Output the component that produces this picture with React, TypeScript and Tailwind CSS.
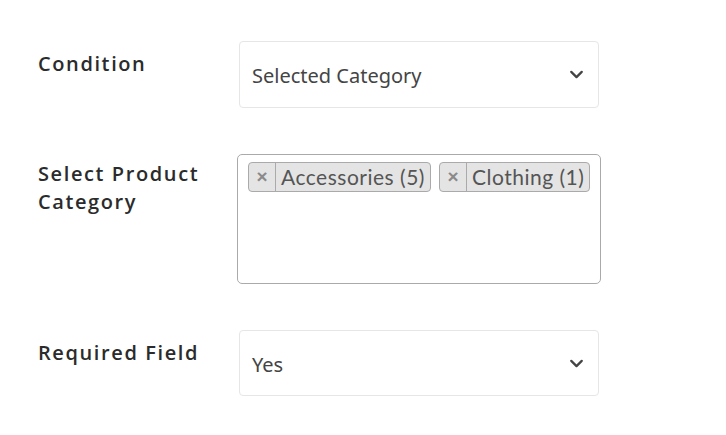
import { ChevronDown } from "lucide-react";

const labelCls =
  "w-[201px] shrink-0 text-[20px] leading-[28px] font-semibold tracking-[1.6px] text-[#2b2b2b] [font-family:'Open_Sans',sans-serif]";

function SelectBox({ value, tall }: { value: string; tall?: boolean }) {
  return (
    <div
      className={`flex ${tall ? "h-[67px]" : "h-[66px]"} w-[360px] items-center justify-between rounded-[4px] border border-[#e6e6e6] bg-white pl-[12px] pr-[11px]`}
    >
      <span className="pt-[3px] text-[20px] text-[#444] [font-family:'Noto_Sans',sans-serif]">{value}</span>
      <ChevronDown size={21} strokeWidth={2.6} className="text-[#444]" />
    </div>
  );
}

function Tag({ label }: { label: string }) {
  return (
    <div className="flex h-[30px] shrink-0 items-stretch rounded-[4px] border border-[#aaa] bg-[#e4e4e4]">
      <span className="flex w-[27px] items-center justify-center border-r border-[#aaa] pt-[1px] text-[19px] font-bold text-[#8a8a8a] [font-family:'Liberation_Sans',sans-serif]">
        ×
      </span>
      <span className="flex items-center whitespace-nowrap px-[5px] text-[21px] tracking-[0.5px] text-[#555] [font-family:'Lato',sans-serif]">
        {label}
      </span>
    </div>
  );
}

export default function App() {
  const categories = ["Accessories (5)", "Clothing (1)"];

  return (
    <main className="min-h-screen bg-white pl-[38px] pt-[41px]">
      <div className="flex flex-col gap-[46px]">
        <div className="flex">
          <div className={`${labelCls} pt-[9px]`}>Condition</div>
          <SelectBox value="Selected Category" tall />
        </div>

        <div className="flex">
          <div className={`${labelCls} pt-[6px]`}>
            Select Product
            <br />
            Category
          </div>
          <div className="-ml-[2px] flex h-[130px] w-[364px] items-start gap-[8px] overflow-hidden rounded-[5px] border border-[#aaa] bg-white pl-[10px] pr-[4px] pt-[7px]">
            {categories.map((c) => (
              <Tag key={c} label={c} />
            ))}
          </div>
        </div>

        <div className="flex">
          <div className={`${labelCls} pt-[9px]`}>Required Field</div>
          <SelectBox value="Yes" />
        </div>
      </div>
    </main>
  );
}
